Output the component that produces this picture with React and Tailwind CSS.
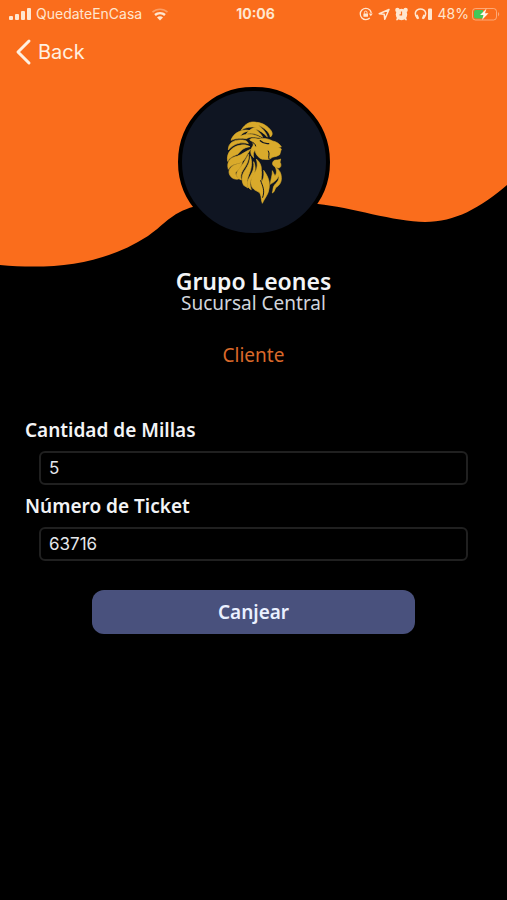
import { useState } from "react";

const SignalIcon = () => (
  <svg className="w-6 h-4" viewBox="0 0 24 16" fill="currentColor">
    <rect x="1" y="10" width="4" height="4" rx="1" />
    <rect x="7" y="8" width="4" height="6" rx="1" />
    <rect x="13" y="5" width="4" height="9" rx="1" />
    <rect x="19" y="2" width="4" height="12" rx="1" />
  </svg>
);

const WifiIcon = () => (
  <svg className="w-5 h-4 ml-1" viewBox="0 0 20 16" fill="none" stroke="currentColor">
    <path d="M2.5 6.2 A11 11 0 0 1 17.5 6.2" strokeWidth="1.6" opacity="0.4" />
    <path d="M5 9 A7.5 7.5 0 0 1 15 9" strokeWidth="2.4" />
    <path d="M10 14.5 L7 11.6 A4 4 0 0 1 13 11.6 Z" fill="currentColor" stroke="none" />
  </svg>
);

const BackIcon = () => (
  <svg className="w-5 h-7" viewBox="0 0 20 28" fill="none" stroke="currentColor" strokeWidth="3" strokeLinecap="round" strokeLinejoin="round">
    <path d="M15 3 L4 14 L15 25" />
  </svg>
);

const RotationLockIcon = () => (
  <svg className="w-4 h-4" viewBox="0 0 16 16" fill="none" stroke="currentColor">
    <path d="M11.8 4 A5.6 5.6 0 1 0 11.8 12" strokeWidth="1.3" />
    <path d="M11.800 4 A5.600 5.600 0 0 1 13.200 7" strokeWidth="1.3" />
    <path d="M10.8 7.5 L14.8 7.5 L12.8 10.3 Z" fill="currentColor" stroke="none" />
    <rect x="5.400" y="7.400" width="4.600" height="3.400" rx="0.500" fill="currentColor" stroke="none" />
    <path d="M6.400 7.600 V6.400 A1.300 1.300 0 0 1 9 6.400 V7.600" strokeWidth="1" />
  </svg>
);

const LocationIcon = () => (
  <svg className="w-3 h-4" viewBox="0 0 12 16" fill="none" stroke="currentColor" strokeWidth="1.5" strokeLinejoin="round">
    <path d="M11 3.5 L1.2 7.8 L6.2 8.3 L6.8 13.3 Z" />
  </svg>
);

const AlarmIcon = () => (
  <svg className="w-4 h-4" viewBox="0 0 16 16">
    <g fill="currentColor">
      <circle cx="7.5" cy="8.5" r="5.7" />
      <circle cx="3.4" cy="4" r="2.2" />
      <circle cx="11.6" cy="4" r="2.2" />
      <path d="M2 14.2 L3.500 10 H11.500 L13 14.2 H11.300 L10 12.800 H5 L3.700 14.2 Z" />
    </g>
    <path d="M7.500 5.500 V8.800 H5.500" fill="none" stroke="#fa6d1c" strokeWidth="1.2" />
  </svg>
);

const HeadphonesIcon = () => (
  <svg className="w-5 h-4" viewBox="0 0 20 16" fill="none" stroke="currentColor">
    <path d="M3.5 12.5 C-0.5 8 1.5 3 6.5 3 C11.500 3 13.500 8 9.500 12.5" strokeWidth="1.5" />
    <path d="M2.700 8.800 L4.300 12.800 M10.300 8.800 L8.700 12.800" strokeWidth="2" />
    <rect x="14" y="2.500" width="4" height="11.500" rx="1" fill="currentColor" stroke="none" />
  </svg>
);

const BatteryIcon = () => (
  <svg className="w-8 h-4" viewBox="0 0 32 16">
    <rect x="1.5" y="2.500" width="24" height="11.500" rx="3" fill="none" stroke="currentColor" opacity="0.5" />
    <path d="M27 6 Q29.500 8.200 27 10.500 Z" fill="currentColor" opacity="0.5" />
    <path d="M5 4 H12 V12.500 H5 Q3 12.500 3 10.500 V6 Q3 4 5 4 Z" fill="#43c759" />
    <path d="M15.500 2.500 L9 9 H12.500 L11 14 L17.500 7.200 H14 Z" fill="#fff6ea" />
  </svg>
);

const LionLogo = () => (
  <svg className="w-[75px] h-[95px]" viewBox="0 0 225 285" fill="#d9aa2b">
    <g stroke="#d9aa2b" strokeWidth="2" strokeLinejoin="round">
      {/* crown */}
      <path d="M76 45 C88 25 104 18 121 22 C141 23 158 36 166 48 C171 56 168 62 163 66 C160 50 144 38 126 30 C139 40 151 53 154 66 C143 54 131 45 116 42 C128 49 136 58 140 67 C124 57 106 52 91 57 C98 46 108 38 121 37 C104 34 88 37 76 45 Z" />
      <path d="M45 76 C52 54 78 40 102 47 C84 50 76 57 73 64 C91 54 119 57 137 70 C116 65 103 64 91 71 C77 69 60 69 45 76 Z" />
      {/* face */}
      <path d="M101 74 C111 65 122 73 132 72 C145 68 158 72 170 78 C181 80 191 86 196 96 L187 97 L196 102 L191 119 C179 127 170 124 166 129 C158 137 148 132 139 133 C128 129 119 119 117 106 C112 111 111 119 113 128 C102 119 102 105 110 94 C115 86 108 80 101 74 Z" />
      <path d="M194 132 C187 136 182 134 175 136 C165 144 169 155 184 158 C194 163 198 149 192 142 Z" />
      {/* mane, left side */}
      <path d="M37 105 C36 83 56 73 77 75 C86 75 95 78 97 86 C76 80 54 85 37 105 Z" />
      <path d="M35 139 C30 112 50 94 72 91 C84 88 92 90 102 95 C83 97 73 108 65 118 C56 121 43 126 35 139 Z" />
      <path d="M37 163 C30 139 46 126 63 124 C78 119 88 109 104 103 C91 119 88 137 73 143 C57 147 46 149 37 163 Z" />
      <path d="M49 189 C35 177 36 163 50 153 C60 146 72 148 79 139 C78 156 66 165 58 174 C60 184 64 187 70 191 C61 194 54 192 49 189 Z" />
      <path d="M83 211 C74 192 79 176 88 164 C97 151 102 139 103 124 C109 139 107 158 101 173 C94 190 90 203 96 219 Z" />
      <path d="M61 179 C64 164 77 155 84 142 C90 132 94 124 98 118 C99 137 91 151 81 165 C74 176 73 184 76 195 C69 192 63 187 61 179 Z" />
      {/* mane, lower locks */}
      <path d="M106 211 C101 193 111 181 119 168 C125 158 125 144 121 132 C132 142 137 152 136 166 C139 180 133 191 137 200 C145 189 144 177 143 166 C156 184 163 201 159 221 C157 240 145 250 139 265 C134 250 137 237 128 231 C118 226 108 222 106 211 Z" />
      <path d="M163 208 C164 192 170 181 169 167 L177 183 C184 174 181 164 178 156 C189 163 196 174 196 187 C197 203 190 211 179 218 C176 225 175 231 169 234 C172 223 170 215 178 207 C188 199 190 190 188 181 C186 193 174 201 163 208 Z" />
      <path d="M94 206 C94 195 103 184 109 171 C114 161 114 150 113 140 C121 158 117 173 111 183 C101 196 100 210 106 224 C98 220 94 215 94 206 Z" />
    </g>
    {/* face details */}
    <g fill="none" stroke="#0f1522" strokeLinecap="round" strokeWidth="4">
      <path d="M133 77 C143 87 150 85 158 86" />
      <path d="M157 108 C163 117 155 124 159 132" strokeWidth="3" />
      <path d="M104 80 C114 83 117 86 119 93" strokeWidth="3" />
      <path d="M134 197 C141 216 147 227 140 247" strokeWidth="3" />
    </g>
  </svg>
);

const StatusBar = () => (
  <div className="flex items-center justify-between h-7 pl-2 pr-1 text-[#ffe6cf] text-sm">
    <div className="flex flex-1 items-center gap-1">
      <SignalIcon />
      <span>QuedateEnCasa</span>
      <WifiIcon />
    </div>
    <span className="font-bold">10:06</span>
    <div className="flex flex-1 items-center justify-end gap-1">
      <RotationLockIcon />
      <LocationIcon />
      <AlarmIcon />
      <HeadphonesIcon />
      <div className="flex items-center gap-0.5">
        <span>48%</span>
        <BatteryIcon />
      </div>
    </div>
  </div>
);

const Field = ({ id, label, value, onChange }) => (
  <div>
    <label htmlFor={id} className="block text-[19px] leading-7 font-semibold font-['Noto_Sans',sans-serif]">
      {label}
    </label>
    <div className="px-[14px] py-[7px]">
      <input
        id={id}
        type="text"
        inputMode="numeric"
        value={value}
        onChange={(e) => onChange(e.target.value)}
        className="block w-full h-[34px] px-2 rounded-md border-2 border-[#202020] bg-black text-[17px] text-gray-200 outline-none"
      />
    </div>
  </div>
);

const App = () => {
  const [miles, setMiles] = useState("5");
  const [ticket, setTicket] = useState("63716");

  return (
    <div className="relative min-h-screen bg-black text-gray-100 font-['Inter',sans-serif]">
      {/* Orange wave behind the header */}
      <svg
        className="absolute inset-x-0 top-0 w-full h-[270px]"
        viewBox="0 0 507 270"
        preserveAspectRatio="none"
      >
        <path
          d="M0 0 H507 V185 C480 208 455 222 425 222 C395 222 350 207 318 204 C270 196 205 199 180 212 C168 218 162 226 148 236 C105 264 55 270 0 265 Z"
          fill="#fa6d1c"
        />
      </svg>

      <div className="relative">
        <header>
          <StatusBar />
          <button type="button" className="flex items-center gap-1 h-12 pl-[14px] text-xl text-[#fff0e0]">
            <BackIcon />
            Back
          </button>
        </header>

        <main className="pt-[11px]">
          <div className="flex items-center justify-center w-[152px] h-[150px] mx-auto rounded-full border-4 border-black bg-[#0f1522]">
            <LionLogo />
          </div>

          <div className="mt-8 text-center font-['Noto_Sans',sans-serif]">
            <h1 className="h-6 overflow-hidden text-[23px] leading-6 font-semibold">Grupo Leones</h1>
            <p className="text-[19px] leading-5 text-gray-300">Sucursal Central</p>
            <p className="mt-[30px] text-[19px] leading-6 text-[#d9692a]">Cliente</p>
          </div>

          <form className="mt-[49px] px-[25px]" onSubmit={(e) => e.preventDefault()}>
            <Field id="miles" label="Cantidad de Millas" value={miles} onChange={setMiles} />
            <Field id="ticket" label="Número de Ticket" value={ticket} onChange={setTicket} />
            <div className="px-[67px] pt-[22px]">
              <button
                type="submit"
                className="block w-full h-11 rounded-xl bg-[#49517d] text-[19px] font-semibold text-[#eaf0ff] font-['Noto_Sans',sans-serif]"
              >
                Canjear
              </button>
            </div>
          </form>
        </main>
      </div>
    </div>
  );
};

export default App;
